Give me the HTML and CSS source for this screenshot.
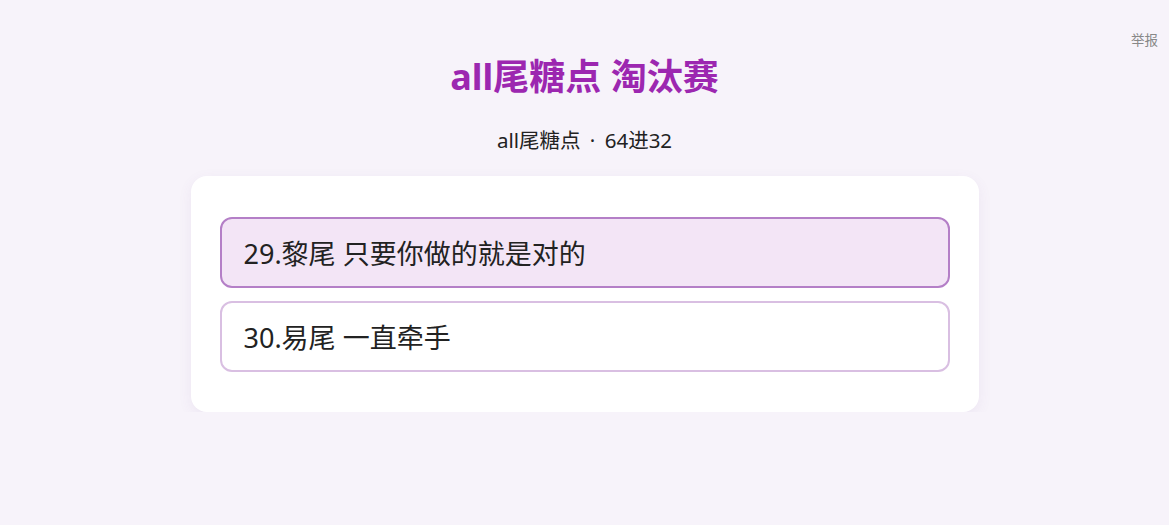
FILE: index.html
```html
<!DOCTYPE html>
<html lang="zh-CN">

<head>
    <meta charset="UTF-8">
    <meta name="viewport" content="width=device-width, initial-scale=1.0">
    <title>all尾糖点 淘汰赛</title>
    <link rel="stylesheet" href="styles.css">
</head>

<body>
    <a class="report" href="#">举报</a>
    <div class="page">
        <h1 class="title">all尾糖点 淘汰赛</h1>
        <p class="subtitle">all尾糖点 <span class="dot">·</span> 64进32</p>
        <div class="card">
            <div class="option selected">29.黎尾 只要你做的就是对的</div>
            <div class="option">30.易尾 一直牵手</div>
        </div>
    </div>
</body>

</html>
```

FILE: styles.css
```css
body {
    font-family: "Noto Sans", "Noto Sans CJK SC", sans-serif;
    margin: 0;
    background-color: #f7f3fa;
    color: #222;
}

.report {
    position: absolute;
    top: 29px;
    right: 11px;
    font-size: 13.5px;
    color: #888;
    text-decoration: none;
}

.page {
    max-width: 788px;
    margin: 0 auto;
    padding-top: 52px;
}

.title {
    margin: 0;
    text-align: center;
    font-size: 36px;
    line-height: 50px;
    font-weight: bold;
    color: #9c27b0;
}

.subtitle {
    margin: 24px 0 22px;
    text-align: center;
    font-size: 20.5px;
    line-height: 28px;
}

.subtitle .dot {
    margin: 0 4px;
}

.card {
    background-color: #fff;
    border-radius: 16px;
    padding: 41px 29px 40px;
    box-shadow: 0 4px 14px rgba(120, 80, 150, 0.08);
    display: flex;
    flex-direction: column;
    gap: 13px;
}

.option {
    border: 2px solid #d9bfe2;
    border-radius: 12px;
    padding: 0 22px;
    height: 67px;
    display: flex;
    align-items: center;
    font-size: 27px;
    color: #222;
}

.option.selected {
    background-color: #f3e5f6;
    border-color: #b47fc7;
}
```
